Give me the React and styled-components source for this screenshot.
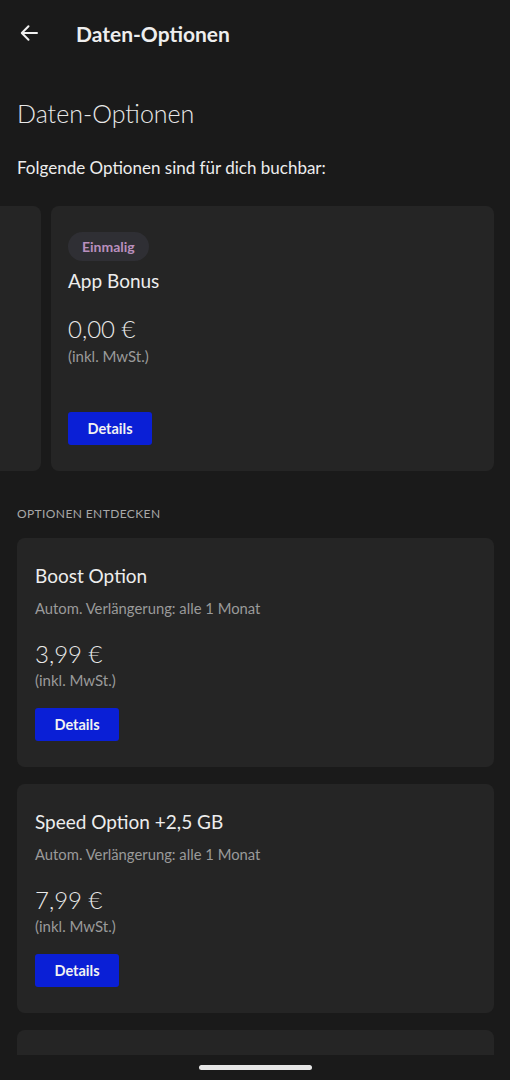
import React from "react";
import styled, { createGlobalStyle } from "styled-components";

const GlobalStyle = createGlobalStyle`
  * { box-sizing: border-box; }
  body {
    margin: 0;
    background: #1a1a1a;
    font-family: Lato, "Noto Sans", sans-serif;
    color: #ececec;
  }
`;

const Screen = styled.div`
  width: 510px;
  height: 1080px;
  display: flex;
  flex-direction: column;
  overflow: hidden;
  background: #1a1a1a;
`;

const Scroll = styled.div`
  flex: 1;
  overflow: hidden;
`;

const TopBar = styled.div`
  height: 66px;
  display: flex;
  align-items: center;
  padding-left: 20px;
  gap: 38px;
`;

const BackButton = styled.button`
  background: none;
  border: none;
  padding: 0;
  width: 18px;
  height: 18px;
  display: flex;
  color: #f0f0f0;
  cursor: pointer;
`;

const BarTitle = styled.h2`
  margin: 0;
  font-size: 21px;
  font-weight: 700;
  color: #eeeeee;
`;

const PageTitle = styled.h1`
  margin: 32px 0 0 17px;
  font-size: 25px;
  font-weight: 300;
  color: #e8e8e8;
`;

const Intro = styled.p`
  margin: 29px 0 0 17px;
  font-size: 17px;
  font-weight: 400;
  color: #ededed;
`;

const Carousel = styled.div`
  display: flex;
  gap: 10px;
  margin-top: 28px;
  margin-left: -402px;
`;

const Card = styled.div`
  flex: ${(p) => (p.$slide ? "0 0 443px" : "none")};
  background: #252525;
  border-radius: 8px;
  padding: ${(p) => (p.$slide ? "26px 17px 26px" : "26px 18px 26px")};
  display: flex;
  flex-direction: column;
  align-items: flex-start;
  min-height: ${(p) => p.$h || 0}px;
`;

const Badge = styled.span`
  background: #2f2f34;
  color: #b98fbd;
  border-radius: 15px;
  padding: 5px 14px;
  font-size: 14px;
  font-weight: 700;
  line-height: 19px;
  margin-bottom: 8px;
`;

const Name = styled.div`
  font-size: 19px;
  color: #ededed;
  line-height: 24px;
`;

const Renewal = styled.div`
  margin-top: 11px;
  font-size: 14.8px;
  color: #9a9a9a;
  line-height: 18px;
`;

const Price = styled.div`
  margin-top: ${(p) => p.$top}px;
  font-size: 24px;
  font-weight: 300;
  color: #eaeaea;
  line-height: 32px;
`;

const Tax = styled.div`
  font-size: 15px;
  color: #9a9a9a;
  line-height: 20px;
  margin-top: ${(p) => p.$top || 0}px;
`;

const DetailsButton = styled.button`
  margin-top: ${(p) => p.$top}px;
  width: 84px;
  height: 33px;
  background: #0a1fd6;
  color: #f2f2f2;
  border: none;
  border-radius: 3px;
  font-family: inherit;
  font-size: 14.5px;
  font-weight: 700;
`;

const SectionLabel = styled.div`
  margin: 35px 0 0 17px;
  font-size: 12px;
  letter-spacing: 0.4px;
  color: #a8a8a8;
`;

const List = styled.div`
  margin: 17px 16px 0 17px;
  display: flex;
  flex-direction: column;
  gap: 17px;
`;

const NavBar = styled.div`
  height: 25px;
  flex: none;
  display: flex;
  justify-content: center;
  align-items: center;
  background: #1a1a1a;
`;

const HomePill = styled.div`
  width: 113px;
  height: 5px;
  border-radius: 3px;
  background: #e6e6e6;
`;

const options = [
  { name: "Boost Option", price: "3,99 €" },
  { name: "Speed Option +2,5 GB", price: "7,99 €" },
];

export default function App() {
  return (
    <Screen>
      <GlobalStyle />
      <Scroll>
        <TopBar>
          <BackButton aria-label="Zurück">
            <svg width="18" height="18" viewBox="0 0 18 18" fill="none">
              <path
                d="M17 9H2M8.5 2.2L1.8 9l6.7 6.8"
                stroke="currentColor"
                strokeWidth="2"
                strokeLinecap="round"
                strokeLinejoin="round"
              />
            </svg>
          </BackButton>
          <BarTitle>Daten-Optionen</BarTitle>
        </TopBar>
        <PageTitle>Daten-Optionen</PageTitle>
        <Intro>Folgende Optionen sind für dich buchbar:</Intro>
        <Carousel>
          <Card $slide $h={265} />
          <Card $slide $h={265}>
            <Badge>Einmalig</Badge>
            <Name>App Bonus</Name>
            <Price $top={20}>0,00 €</Price>
            <Tax $top={1}>(inkl. MwSt.)</Tax>
            <DetailsButton $top={46}>Details</DetailsButton>
          </Card>
        </Carousel>
        <SectionLabel>OPTIONEN ENTDECKEN</SectionLabel>
        <List>
          {options.map((o) => (
            <Card key={o.name} $h={228}>
              <Name>{o.name}</Name>
              <Renewal>Autom. Verlängerung: alle 1 Monat</Renewal>
              <Price $top={21}>{o.price}</Price>
              <Tax>(inkl. MwSt.)</Tax>
              <DetailsButton $top={18}>Details</DetailsButton>
            </Card>
          ))}
          <Card $h={228} />
        </List>
      </Scroll>
      <NavBar>
        <HomePill />
      </NavBar>
    </Screen>
  );
}
